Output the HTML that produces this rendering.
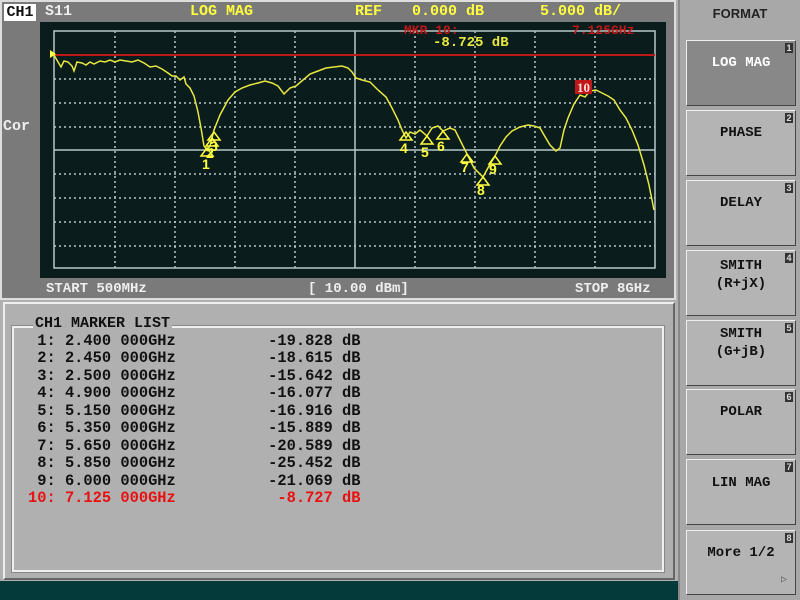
<!DOCTYPE html>
<html><head><style>
*{margin:0;padding:0;box-sizing:border-box}
body{width:800px;height:600px;background:#b0b0b0;position:relative;overflow:hidden;font-family:"Liberation Mono",monospace;font-weight:bold}
.a{position:absolute}
.mono{font-family:"Liberation Mono",monospace;font-weight:bold;white-space:pre}
.btn{position:absolute;left:686px;width:110px;background:#b4b4b4;border:1px solid #eee;border-right-color:#444;border-bottom-color:#444;font-family:"Liberation Mono",monospace;font-weight:bold;font-size:14px;text-align:center;color:#111;line-height:18px}
.num{position:absolute;right:2px;top:2px;font-size:9px;background:#333;color:#ddd;width:8px;height:10px;line-height:10px;text-align:center;font-family:"Liberation Sans",sans-serif}
.row{position:absolute;left:28px;font-size:15.4px;color:#111}
</style></head><body>
<div class="a" style="left:0;top:0;width:676px;height:300px;background:#7a7a7a;border:2px solid #ddd"></div>
<div class="a" style="left:4px;top:4px;width:32px;height:17px;background:#fff;color:#111;font-size:15px;line-height:17px;text-align:center" >CH1</div>
<div class="a mono" style="left:45px;top:3px;font-size:15px;color:#eee">S11</div>
<div class="a mono" style="left:190px;top:3px;font-size:15px;color:#ffff40">LOG MAG</div>
<div class="a mono" style="left:355px;top:3px;font-size:15px;color:#ffff40">REF</div>
<div class="a mono" style="left:412px;top:3px;font-size:15px;color:#ffff40">0.000 dB</div>
<div class="a mono" style="left:540px;top:3px;font-size:15px;color:#ffff40">5.000 dB/</div>
<div class="a mono" style="left:3px;top:118px;font-size:15px;color:#eee">Cor</div>
<div class="a" style="left:40px;top:22px;width:626px;height:256px;background:#0b1c1c"></div>
<svg class="a" style="left:0;top:0" width="680" height="300">
<g stroke="#b8c8c8" stroke-width="1.5" stroke-dasharray="2,3">
<line x1="115" y1="31" x2="115" y2="268"/><line x1="175" y1="31" x2="175" y2="268"/><line x1="235" y1="31" x2="235" y2="268"/><line x1="295" y1="31" x2="295" y2="268"/>
<line x1="415" y1="31" x2="415" y2="268"/><line x1="475" y1="31" x2="475" y2="268"/><line x1="535" y1="31" x2="535" y2="268"/><line x1="595" y1="31" x2="595" y2="268"/>
<line x1="54" y1="79" x2="655" y2="79"/><line x1="54" y1="103" x2="655" y2="103"/><line x1="54" y1="127" x2="655" y2="127"/>
<line x1="54" y1="174" x2="655" y2="174"/><line x1="54" y1="198" x2="655" y2="198"/><line x1="54" y1="222" x2="655" y2="222"/><line x1="54" y1="246" x2="655" y2="246"/>
</g>
<g stroke="#b8c8c8" stroke-width="1.5" fill="none">
<rect x="54" y="31" width="601" height="237"/>
<line x1="355" y1="31" x2="355" y2="268"/><line x1="54" y1="150" x2="655" y2="150"/>
</g>
<line x1="54" y1="55" x2="655" y2="55" stroke="#c01818" stroke-width="2"/>
<polygon points="50,50 56,54 50,58" fill="#ffff40"/>
<polyline fill="none" stroke="#e8e840" stroke-width="1.5" points="54,55 58,62 61,67 64,61 68,62 72,66 74,71 77,62 82,63 86,65 90,62 94,64 100,61 105,62 110,60 115,62 120,60 126,61 132,62 138,60 144,63 150,67 156,66 162,69 168,73 172,76 176,76 180,80 184,77 186,84 190,88 194,96 198,112 201,128 204,146 207,150 210,146 214,130 220,115 228,100 235,92 242,88 250,85 258,83 265,81 272,83 278,86 284,94 290,88 296,86 303,80 310,74 318,71 326,68 334,67 342,66 348,68 352,72 356,78 362,80 370,82 378,90 386,97 392,108 398,120 402,130 406,138 410,132 415,134 420,130 427,136 432,128 438,126 443,131 450,128 455,130 460,140 467,154 474,168 483,177 489,166 495,156 500,146 506,137 512,131 520,127 528,125 534,126 540,128 544,135 550,145 556,151 560,148 564,130 568,118 574,104 580,95 585,97 590,91 596,90 602,93 608,96 614,100 620,110 626,118 632,130 638,145 644,165 649,185 652,200 654,210"/>
<g fill="none" stroke="#ffff40" stroke-width="1.5">
<polygon points="201,156 207,148 213,156"/><polygon points="206,146 212,138 218,146"/><polygon points="208,140 214,132 220,140"/>
<polygon points="400,140 406,132 412,140"/><polygon points="421,144 427,136 433,144"/><polygon points="437,139 443,131 449,139"/>
<polygon points="461,162 467,154 473,162"/><polygon points="477,185 483,177 489,185"/><polygon points="489,164 495,156 501,164"/>
</g>
<g fill="#ffff40" font-family="Liberation Sans,sans-serif" font-weight="bold" font-size="14">
<text x="202" y="169">1</text><text x="206" y="158">2</text><text x="210" y="151">3</text>
<text x="400" y="153">4</text><text x="421" y="157">5</text><text x="437" y="151">6</text>
<text x="461" y="172">7</text><text x="477" y="195">8</text><text x="489" y="174">9</text>
</g>
<rect x="575" y="80" width="17" height="14" fill="#c01818"/>
<text x="577" y="92" fill="#ffdddd" font-family="Liberation Serif,serif" font-weight="bold" font-size="13">10</text>
<text x="404" y="34" fill="#c01818" font-family="Liberation Mono,monospace" font-size="13">MKR 10:</text>
<text x="572" y="34" fill="#c01818" font-family="Liberation Mono,monospace" font-size="13">7.125GHz</text>
<text x="433" y="46" fill="#e8e840" font-family="Liberation Mono,monospace" font-size="14">-8.725 dB</text>
</svg>
<div class="a mono" style="left:46px;top:281px;font-size:14px;color:#eee">START 500MHz</div>
<div class="a mono" style="left:308px;top:281px;font-size:14px;color:#eee">[ 10.00 dBm]</div>
<div class="a mono" style="left:575px;top:281px;font-size:14px;color:#eee">STOP 8GHz</div>
<div class="a" style="left:3px;top:302px;width:672px;height:278px;border:2px solid #eee;border-right-color:#666;border-bottom-color:#666"></div>
<div class="a" style="left:12px;top:326px;width:652px;height:246px;border:2px solid #f0f0f0;outline:1px solid #888"></div>
<div class="a mono" style="left:33px;top:315px;font-size:15px;color:#111;background:#b0b0b0;padding:0 2px">CH1 MARKER LIST</div>
<div class="row mono" style="top:332px"> 1: 2.400 000GHz          -19.828 dB</div>
<div class="row mono" style="top:349px"> 2: 2.450 000GHz          -18.615 dB</div>
<div class="row mono" style="top:367px"> 3: 2.500 000GHz          -15.642 dB</div>
<div class="row mono" style="top:384px"> 4: 4.900 000GHz          -16.077 dB</div>
<div class="row mono" style="top:402px"> 5: 5.150 000GHz          -16.916 dB</div>
<div class="row mono" style="top:419px"> 6: 5.350 000GHz          -15.889 dB</div>
<div class="row mono" style="top:437px"> 7: 5.650 000GHz          -20.589 dB</div>
<div class="row mono" style="top:454px"> 8: 5.850 000GHz          -25.452 dB</div>
<div class="row mono" style="top:472px"> 9: 6.000 000GHz          -21.069 dB</div>
<div class="row mono" style="top:489px;color:#e81010">10: 7.125 000GHz           -8.727 dB</div>
<div class="a" style="left:0;top:581px;width:680px;height:19px;background:#053a3a"></div>
<div class="a" style="left:678px;top:0;width:122px;height:600px;background:#a8a8a8;border-left:2px solid #888"></div>
<div class="a" style="left:680px;top:6px;width:120px;text-align:center;font-family:'Liberation Sans',sans-serif;font-size:13px;color:#222">FORMAT</div>
<div class="btn" style="top:40px;height:66px;background:#888;color:#fff;padding-top:13px">LOG MAG<div class="num">1</div></div>
<div class="btn" style="top:110px;height:66px;padding-top:13px">PHASE<div class="num">2</div></div>
<div class="btn" style="top:180px;height:66px;padding-top:13px">DELAY<div class="num">3</div></div>
<div class="btn" style="top:250px;height:66px;padding-top:6px">SMITH<br>(R+jX)<div class="num">4</div></div>
<div class="btn" style="top:320px;height:66px;padding-top:4px">SMITH<br>(G+jB)<div class="num">5</div></div>
<div class="btn" style="top:389px;height:66px;padding-top:13px">POLAR<div class="num">6</div></div>
<div class="btn" style="top:459px;height:66px;padding-top:14px">LIN MAG<div class="num">7</div></div>
<div class="btn" style="top:530px;height:65px;padding-top:13px">More 1/2<div class="num">8</div><div style="position:absolute;right:8px;bottom:4px;font-size:10px;color:#555">▷</div></div>
</body></html>
